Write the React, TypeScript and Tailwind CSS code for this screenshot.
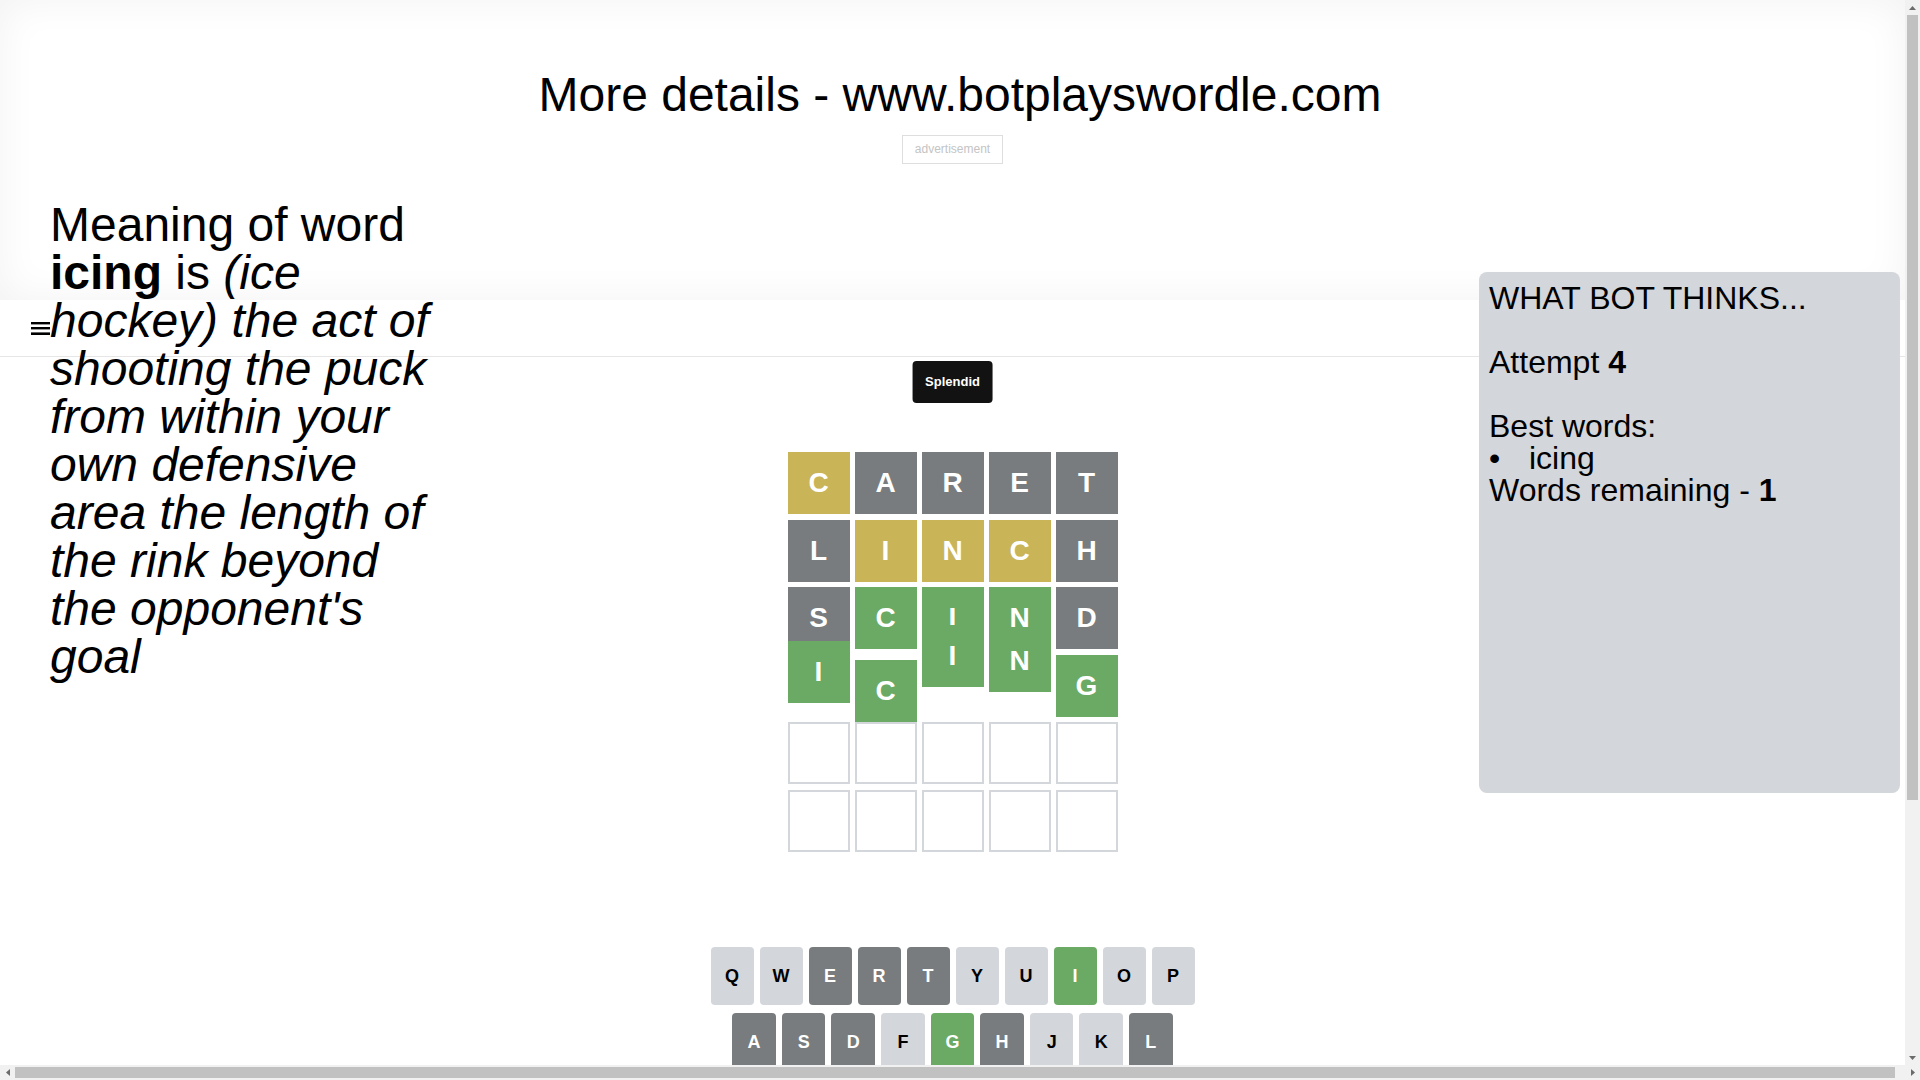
const GRAY = 'bg-[#787c7e] text-white';
const YELLOW = 'bg-[#c9b458] text-white';
const GREEN = 'bg-[#6aaa64] text-white';
const LIGHT = 'bg-[#d3d6da] text-black';

type Tile = { l: string; c: string; shift?: string };

const board: Tile[][] = [
  [
    { l: 'C', c: YELLOW },
    { l: 'A', c: GRAY },
    { l: 'R', c: GRAY },
    { l: 'E', c: GRAY },
    { l: 'T', c: GRAY },
  ],
  [
    { l: 'L', c: GRAY },
    { l: 'I', c: YELLOW },
    { l: 'N', c: YELLOW },
    { l: 'C', c: YELLOW },
    { l: 'H', c: GRAY },
  ],
  [
    { l: 'S', c: GRAY },
    { l: 'C', c: GREEN },
    { l: 'I', c: GREEN },
    { l: 'N', c: GREEN },
    { l: 'D', c: GRAY },
  ],
  // winning row, caught mid-bounce
  [
    { l: 'I', c: GREEN, shift: '-translate-y-[14px]' },
    { l: 'C', c: GREEN, shift: 'translate-y-[5px]' },
    { l: 'I', c: GREEN, shift: '-translate-y-[30px]' },
    { l: 'N', c: GREEN, shift: '-translate-y-[25px]' },
    { l: 'G', c: GREEN, shift: 'translate-y-0' },
  ],
];

const keyRows: [string, string][][] = [
  [
    ['Q', LIGHT], ['W', LIGHT], ['E', GRAY], ['R', GRAY], ['T', GRAY],
    ['Y', LIGHT], ['U', LIGHT], ['I', GREEN], ['O', LIGHT], ['P', LIGHT],
  ],
  [
    ['A', GRAY], ['S', GRAY], ['D', GRAY], ['F', LIGHT], ['G', GREEN],
    ['H', GRAY], ['J', LIGHT], ['K', LIGHT], ['L', GRAY],
  ],
  [
    ['ENTER', LIGHT], ['Z', LIGHT], ['X', LIGHT], ['C', GREEN], ['V', LIGHT],
    ['B', LIGHT], ['N', GREEN], ['M', LIGHT], ['⌫', LIGHT],
  ],
];

function Hamburger() {
  return (
    <svg width="19" height="13" viewBox="0 0 19 13" className="text-black">
      <rect x="0" y="0" width="19" height="2.4" fill="currentColor" />
      <rect x="0" y="5" width="19" height="2.4" fill="currentColor" />
      <rect x="0" y="10.4" width="19" height="2.6" fill="currentColor" />
    </svg>
  );
}

function Arrow({ dir }: { dir: 'up' | 'down' | 'left' | 'right' }) {
  const pts = {
    up: '3.5,0 7,4 0,4',
    down: '0,0 7,0 3.5,4',
    left: '4,0 4,7 0,3.5',
    right: '0,0 4,3.5 0,7',
  }[dir];
  const w = dir === 'up' || dir === 'down' ? 7 : 4;
  const h = dir === 'up' || dir === 'down' ? 4 : 7;
  return (
    <div className="w-[15px] h-[15px] flex items-center justify-center shrink-0">
      <svg width={w} height={h}>
        <polygon points={pts} fill="#6b6b6b" />
      </svg>
    </div>
  );
}

function Board() {
  const rows = [...board, [], []];
  return (
    <div className="flex flex-col gap-y-[5.5px]">
      {rows.map((row, r) => (
        <div key={r} className="flex gap-x-[5px]">
          {row.length
            ? row.map((t, i) => (
                <div
                  key={i}
                  className={`w-[62px] h-[62px] flex items-center justify-center text-[28px] font-bold ${t.c} ${t.shift ?? ''}`}
                >
                  {t.l}
                </div>
              ))
            : [0, 1, 2, 3, 4].map((i) => (
                <div key={i} className="w-[62px] h-[62px] border-2 border-[#d3d6da] bg-white" />
              ))}
        </div>
      ))}
    </div>
  );
}

function Keyboard() {
  return (
    <div className="w-[484px] flex flex-col gap-[8px]">
      {keyRows.map((row, r) => (
        <div key={r} className={`flex gap-[6px] ${r === 1 ? 'px-[21.8px]' : ''}`}>
          {row.map(([k, c]) => (
            <button
              key={k}
              className={`h-[58px] rounded-[4px] font-bold flex items-center justify-center ${c} ${
                k === 'ENTER' || k === '⌫' ? 'flex-[1.5] text-[12px]' : 'flex-1 text-[18px]'
              }`}
            >
              {k}
            </button>
          ))}
        </div>
      ))}
    </div>
  );
}

export default function App() {
  return (
    <div className="relative w-[1920px] h-[1080px] overflow-hidden bg-white text-black font-['Liberation_Sans',Arial,sans-serif]">
      <div className="w-[1905px]">
        {/* promo banner */}
        <div className="h-[300px] flex flex-col items-center shadow-[inset_0_0_40px_rgba(0,0,0,0.055)]">
          <h1 className="pt-[67px] pl-[15px] text-[48px] leading-[55px] font-normal">
            More details - www.botplayswordle.com
          </h1>
          <div className="mt-[13px] border border-[#dedede] px-[11.5px] py-[7px] text-[12px] leading-[13px] text-[#c4c4c4]">
            advertisement
          </div>
        </div>

        <header className="h-[57px] border-b border-[#e6e6e6] flex items-center pl-[31px]">
          <Hamburger />
        </header>

        <main className="relative flex flex-col items-center pt-[95px]">
          <div className="absolute top-[4px] left-1/2 -translate-x-1/2 h-[42px] px-[13px] flex items-center rounded-[4px] bg-[#121212] text-white text-[13px] font-bold">
            Splendid
          </div>
          <Board />
          <div className="mt-[95.5px]">
            <Keyboard />
          </div>
        </main>
      </div>

      {/* word meaning, drawn over the page */}
      <div className="absolute left-[50px] top-[201px] w-[390px] text-[48px] leading-[48px]">
        Meaning of word <b>icing</b> is{' '}
        <i>
          (ice hockey) the act of shooting the puck from within your own defensive area the length of the rink
          beyond the opponent's goal
        </i>
      </div>

      {/* bot panel */}
      <div className="absolute left-[1479px] top-[272px] w-[421px] h-[521px] rounded-[8px] bg-[#d3d6da] p-[10px] text-[32px] leading-[32px]">
        <div>WHAT BOT THINKS...</div>
        <br />
        <div>
          Attempt <b>4</b>
        </div>
        <br />
        <div>Best words:</div>
        <ul>
          <li className="flex">
            <span className="w-10 shrink-0">•</span>
            <span>icing</span>
          </li>
        </ul>
        <div>
          Words remaining - <b>1</b>
        </div>
      </div>

      {/* scrollbars */}
      <div className="absolute top-0 right-0 w-[15px] h-[1065px] bg-[#f1f1f1] flex flex-col items-center">
        <Arrow dir="up" />
        <div className="w-[11px] h-[785px] bg-[#c1c1c1]" />
        <div className="flex-1" />
        <Arrow dir="down" />
      </div>
      <div className="absolute bottom-0 left-0 w-[1920px] h-[15px] bg-[#f1f1f1] flex items-center">
        <Arrow dir="left" />
        <div className="w-[1880px] h-[11px] bg-[#c1c1c1]" />
        <div className="flex-1" />
        <Arrow dir="right" />
      </div>
    </div>
  );
}
